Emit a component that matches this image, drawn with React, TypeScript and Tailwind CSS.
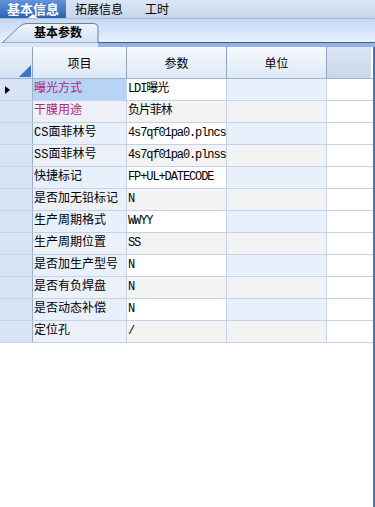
import React from 'react';

type Row = { name: string; value: string; pink?: boolean };

const ROWS: Row[] = [
  { name: '曝光方式', value: 'LDI曝光', pink: true },
  { name: '干膜用途', value: '负片菲林', pink: true },
  { name: 'CS面菲林号', value: '4s7qf01pa0.plncs' },
  { name: 'SS面菲林号', value: '4s7qf01pa0.plnss' },
  { name: '快捷标记', value: 'FP+UL+DATECODE' },
  { name: '是否加无铅标记', value: 'N' },
  { name: '生产周期格式', value: 'WWYY' },
  { name: '生产周期位置', value: 'SS' },
  { name: '是否加生产型号', value: 'N' },
  { name: '是否有负焊盘', value: 'N' },
  { name: '是否动态补偿', value: 'N' },
  { name: '定位孔', value: '/' },
];

const cjk = 'font-["Liberation_Mono","Noto_Sans_CJK_SC",monospace]';

const SubTab: React.FC = () => (
  <div className="relative w-[99px] h-full flex items-end">
    <svg className="absolute inset-0" width="99" height="24" viewBox="0 0 99 24">
      <defs>
        <linearGradient id="tabfill" x1="0" y1="0" x2="0" y2="1">
          <stop offset="0" stopColor="#eef4fd" />
          <stop offset="1" stopColor="#d2e1f6" />
        </linearGradient>
      </defs>
      <path d="M2 24 L20 7 Q23 4.5 27 4.5 L94 4.5 Q98 4.5 98 8.5 L98 24 Z" fill="url(#tabfill)" stroke="#6d829f" strokeWidth="1" />
    </svg>
    <span className="relative w-full pl-[34px] pb-[3px] text-[12px] leading-[14px] font-bold text-black font-['Noto_Sans_CJK_SC',sans-serif]">
      基本参数
    </span>
  </div>
);

const App: React.FC = () => {
  return (
    <div className="w-[375px] h-[507px] bg-white overflow-hidden flex flex-col font-['Noto_Sans_CJK_SC',sans-serif]">
      {/* top tabs */}
      <div className="h-[19px] flex shrink-0 bg-gradient-to-b from-[#dbe6f5] to-[#c6d6ec] border-b border-[#a9b9cf] text-[12px] leading-[18px] text-black">
        <div className="relative w-[66px] bg-gradient-to-b from-[#6494d8] to-[#2b61b3] text-white font-bold text-[13px] flex items-center justify-center">
          基本信息
          <span className="absolute bottom-0 left-[28px] w-0 h-0 border-x-[5px] border-x-transparent border-b-[4px] border-b-white" />
        </div>
        <div className="pl-[9px] w-[79px]">拓展信息</div>
        <div className="pl-[0px]">工时</div>
      </div>

      {/* sub tabs */}
      <div className="h-[23px] shrink-0 flex bg-gradient-to-b from-[#c5d8f5] to-[#e9f0fd]">
        <SubTab />
      </div>

      {/* panel band */}
      <div className="h-[5px] shrink-0 flex">
        <div className="w-[98px] bg-[#dbe7f7]" />
        <div className="flex-1 border-t border-[#3a5f99] bg-[#93b3e2]" />
      </div>

      {/* grid */}
      <div className="flex-1 border-r-2 border-[#4b73b1] bg-white">
        <div className="grid grid-cols-[33px_94px_100px_100px_44px] h-[32px] text-[12px] text-black border-b border-[#9fb2d0]">
          <div className="relative bg-gradient-to-b from-[#eef3fb] to-[#d4e0f1] border-r border-[#8fa3c2]">
            <span className="absolute right-[1px] bottom-[1px] w-0 h-0 border-l-[12px] border-l-transparent border-b-[12px] border-b-[#3d73c4]" />
          </div>
          <div className="flex items-center justify-center bg-gradient-to-b from-[#f7fafe] to-[#dde8f6] border-r border-[#8fa3c2]">项目</div>
          <div className="flex items-center justify-center bg-gradient-to-b from-[#f7fafe] to-[#dde8f6] border-r border-[#8fa3c2]">参数</div>
          <div className="flex items-center justify-center bg-gradient-to-b from-[#f7fafe] to-[#dde8f6] border-r border-[#8fa3c2]">单位</div>
          <div className="bg-gradient-to-b from-[#dbe5f3] to-[#c9d7ea]" />
        </div>

        {ROWS.map((row, i) => {
          const odd = i % 2 === 0;
          return (
            <div key={row.name} className="grid grid-cols-[33px_94px_100px_100px_44px] h-[22px] border-b border-[#c3d2ec] text-[12px] leading-[21px]">
              <div className="relative bg-[#d8e4f4] border-r border-[#9cb1d2] flex items-center pl-[5px]">
                {i === 0 && (
                  <span className="w-0 h-0 border-y-[4px] border-y-transparent border-l-[5px] border-l-black" />
                )}
              </div>
              <div
                className={`${cjk} pl-[1px] border-r border-[#c3d2ec] whitespace-nowrap overflow-hidden ${
                  i === 0 ? 'bg-[#b7d3f5]' : odd ? 'bg-[#e8f0fb]' : 'bg-[#edf1f7]'
                } ${row.pink ? 'text-[#b4237f]' : 'text-black'}`}
              >
                {row.name}
              </div>
              <div
                className={`${cjk} pl-[1px] tracking-[-1.1px] border-r border-[#c3d2ec] whitespace-nowrap overflow-hidden text-black ${
                  odd ? 'bg-white' : 'bg-[#f3f3f3]'
                }`}
              >
                {row.value}
              </div>
              <div className={`border-r border-[#c3d2ec] ${odd ? 'bg-[#e8f0fb]' : 'bg-[#f3f3f3]'}`} />
              <div className="bg-white" />
            </div>
          );
        })}
      </div>
    </div>
  );
};

export default App;
